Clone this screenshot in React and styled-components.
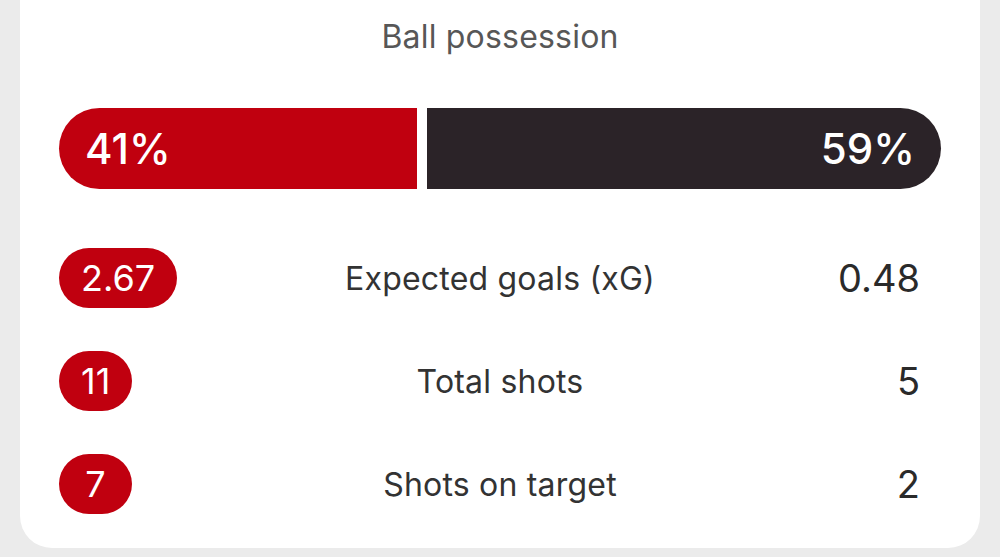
import styled, { createGlobalStyle } from "styled-components";

const GlobalStyle = createGlobalStyle`
  html, body {
    margin: 0;
    padding: 0;
    background: #ebebeb;
    font-family: Inter, "Noto Sans", sans-serif;
    -webkit-font-smoothing: antialiased;
  }
`;

const Page = styled.div`
  width: 1000px;
  height: 557px;
  overflow: hidden;
  padding: 0 20px;
  box-sizing: border-box;
`;

const Card = styled.div`
  background: #ffffff;
  height: 548px;
  box-sizing: border-box;
  border-radius: 0 0 32px 32px;
  padding: 17px 39px 0;
  display: flex;
  flex-direction: column;
`;

const Title = styled.div`
  text-align: center;
  font-size: 32px;
  line-height: 40px;
  color: #575757;
  letter-spacing: 0.2px;
`;

const Bar = styled.div`
  margin-top: 51px;
  height: 81px;
  display: flex;
  justify-content: space-between;
`;

const Segment = styled.div`
  flex: none;
  box-sizing: border-box;
  background: ${(p) => p.$color};
  border-radius: ${(p) => (p.$side === "left" ? "41px 0 0 41px" : "0 41px 41px 0")};
  display: flex;
  align-items: center;
  justify-content: ${(p) => (p.$side === "left" ? "flex-start" : "flex-end")};
  padding: 0 26px;
  color: #ffffff;
  font-size: 42px;
  font-weight: 500;
`;

const Rows = styled.div`
  margin-top: 59px;
  display: flex;
  flex-direction: column;
  gap: 43px;
`;

const Row = styled.div`
  display: grid;
  grid-template-columns: 1fr auto 1fr;
  align-items: center;
  height: 60px;
`;

const Pill = styled.div`
  justify-self: start;
  height: 60px;
  min-width: 73px;
  box-sizing: border-box;
  padding: 0 22px;
  border-radius: 30px;
  background: #c0000f;
  color: #ffffff;
  font-size: 36px;
  display: flex;
  align-items: center;
  justify-content: center;
`;

const Label = styled.div`
  font-size: 32px;
  color: #333333;
  text-align: center;
  letter-spacing: 0.2px;
`;

const Value = styled.div`
  justify-self: end;
  padding-right: 21px;
  font-size: 38px;
  color: #2a2a2a;
`;

const stats = [
  { home: "2.67", label: "Expected goals (xG)", away: "0.48" },
  { home: "11", label: "Total shots", away: "5" },
  { home: "7", label: "Shots on target", away: "2" },
];

const home = 41;
const gap = 10;

export default function App() {
  return (
    <Page>
      <GlobalStyle />
      <Card>
        <Title>Ball possession</Title>
        <Bar>
          <Segment
            $color="#c0000f"
            $side="left"
            style={{ width: `calc((100% - ${gap}px) * ${home / 100})` }}
          >
            {home}%
          </Segment>
          <Segment
            $color="#2b2328"
            $side="right"
            style={{ width: `calc((100% - ${gap}px) * ${(100 - home) / 100})` }}
          >
            {100 - home}%
          </Segment>
        </Bar>
        <Rows>
          {stats.map((s) => (
            <Row key={s.label}>
              <Pill>{s.home}</Pill>
              <Label>{s.label}</Label>
              <Value>{s.away}</Value>
            </Row>
          ))}
        </Rows>
      </Card>
    </Page>
  );
}
